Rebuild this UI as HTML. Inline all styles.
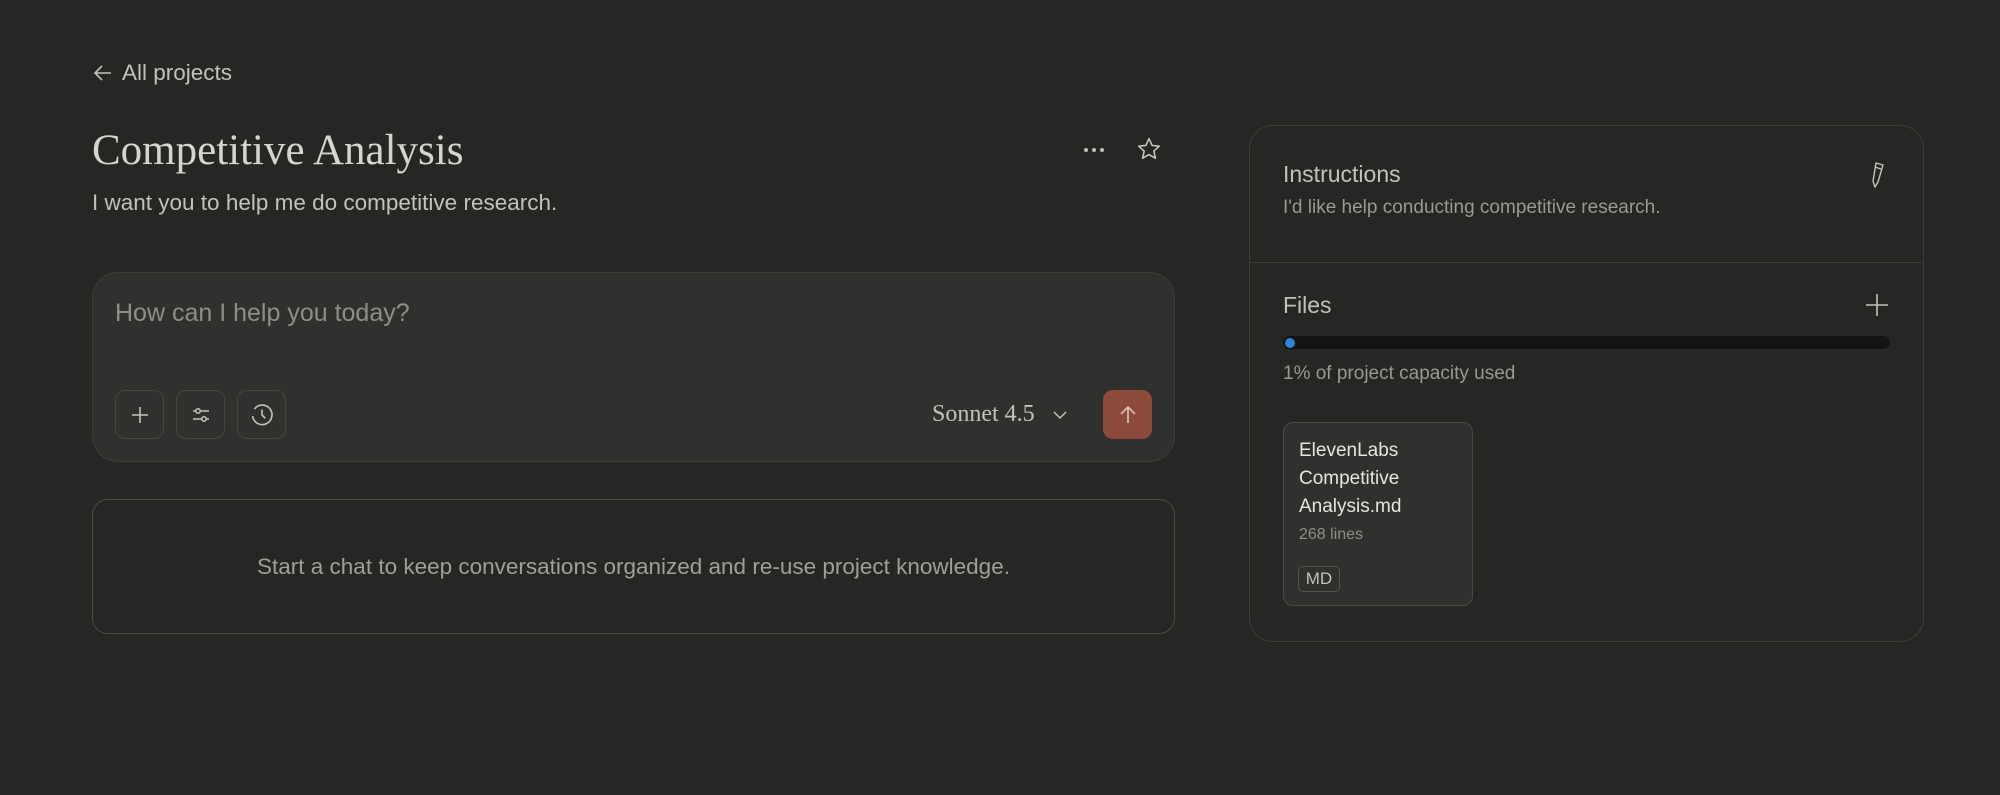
<!DOCTYPE html>
<html><head><meta charset="utf-8"><style>
*{box-sizing:border-box;margin:0;padding:0}
body{width:2000px;height:795px;background:#262624;color:#c3c1b8;font-family:"Liberation Sans",sans-serif;position:relative;overflow:hidden}
.a{position:absolute}
.serif{font-family:"Liberation Serif",serif}
.btn{position:absolute;top:390px;width:49px;height:49px;border:1px solid #46453f;border-radius:10px;display:flex;align-items:center;justify-content:center}
</style></head><body>
<div class="a" style="left:93px;top:60px;font-size:22.5px;color:#c3c1b8;display:flex;align-items:center;gap:9px">
<svg width="20" height="20" viewBox="0 0 20 20" fill="none" stroke="#c3c1b8" stroke-width="1.6"><path d="M18 10H3M9 3L2 10l7 7"/></svg>All projects</div>
<div class="a serif" style="left:92px;top:126px;font-size:43px;color:#d6d4cb">Competitive Analysis</div>
<div class="a" style="left:92px;top:190px;font-size:22.5px;color:#c3c1b8">I want you to help me do competitive research.</div>
<svg class="a" style="left:1082px;top:140px" width="24" height="20" viewBox="0 0 24 20" fill="#c3c1b8"><circle cx="4" cy="10" r="2"/><circle cx="12" cy="10" r="2"/><circle cx="20" cy="10" r="2"/></svg>
<svg class="a" style="left:1136px;top:136px" width="26" height="26" viewBox="0 0 24 24" fill="none" stroke="#c3c1b8" stroke-width="1.5" stroke-linejoin="round"><path d="M12 2.5l2.9 6.2 6.6.7-5 4.5 1.4 6.6L12 17.2 6.1 20.5l1.4-6.6-5-4.5 6.6-.7z"/></svg>
<div class="a" style="left:92px;top:272px;width:1083px;height:190px;background:#30302e;border:1px solid #3d3c38;border-radius:26px"></div>
<div class="a" style="left:115px;top:299px;font-size:25px;color:#8f8d86">How can I help you today?</div>
<div class="btn" style="left:115px"><svg width="22" height="22" viewBox="0 0 22 22" stroke="#c3c1b8" stroke-width="1.6"><path d="M11 3v16M3 11h16"/></svg></div>
<div class="btn" style="left:176px"><svg width="22" height="22" viewBox="0 0 22 22" fill="none" stroke="#c3c1b8" stroke-width="1.5"><path d="M3 7h16M3 15h16"/><circle cx="8" cy="7" r="2.2" fill="#30302e"/><circle cx="14" cy="15" r="2.2" fill="#30302e"/></svg></div>
<div class="btn" style="left:237px"><svg width="26" height="26" viewBox="0 0 24 24" fill="none" stroke="#c3c1b8" stroke-width="1.5"><path d="M5 6.5A9 9 0 1 1 3.3 13"/><path d="M12 7v5l3 3"/></svg></div>
<div class="a serif" style="left:932px;top:401px;font-size:24px;color:#c3c1b8">Sonnet 4.5</div>
<svg class="a" style="left:1051px;top:406px" width="18" height="18" viewBox="0 0 18 18" fill="none" stroke="#c3c1b8" stroke-width="1.5"><path d="M3 6l6 6 6-6"/></svg>
<div class="a" style="left:1103px;top:390px;width:49px;height:49px;border-radius:10px;background:#8b4a3a;display:flex;align-items:center;justify-content:center"><svg width="22" height="22" viewBox="0 0 22 22" fill="none" stroke="#d9b9ad" stroke-width="1.8"><path d="M11 19V3M4 10l7-7 7 7"/></svg></div>
<div class="a" style="left:92px;top:499px;width:1083px;height:135px;border:1px solid #4b4a45;border-radius:16px;display:flex;align-items:center;justify-content:center;font-size:22.5px;color:#a09e97">Start a chat to keep conversations organized and re-use project knowledge.</div>
<div class="a" style="left:1249px;top:125px;width:675px;height:517px;border:1px solid #3d3c38;border-radius:24px"></div>
<div class="a" style="left:1249px;top:262px;width:675px;height:1px;background:#3d3c38"></div>
<div class="a" style="left:1283px;top:161px;font-size:23px;color:#c3c1b8">Instructions</div>
<div class="a" style="left:1283px;top:197px;font-size:19px;color:#9a988f">I'd like help conducting competitive research.</div>
<svg class="a" style="left:1866px;top:160px" width="22" height="30" viewBox="0 0 22 30" fill="none" stroke="#c3c1b8" stroke-width="1.4" stroke-linejoin="round"><path d="M10 3l7 2-5 17-3 5-2-6z M9 7l6 2"/></svg>
<div class="a" style="left:1283px;top:292px;font-size:23px;color:#c3c1b8">Files</div>
<svg class="a" style="left:1865px;top:293px" width="24" height="24" viewBox="0 0 24 24" stroke="#c3c1b8" stroke-width="1.6"><path d="M12 1v22M1 12h22"/></svg>
<div class="a" style="left:1283px;top:336px;width:607px;height:13px;background:#141413;border-radius:7px"><div style="position:absolute;left:2px;top:1.5px;width:10px;height:10px;background:#2c84db;border-radius:5px"></div></div>
<div class="a" style="left:1283px;top:363px;font-size:19px;color:#9a988f">1% of project capacity used</div>
<div class="a" style="left:1283px;top:422px;width:190px;height:184px;background:#30302e;border:1px solid #4a4945;border-radius:10px"></div>
<div class="a" style="left:1299px;top:437px;font-size:19px;line-height:28px;color:#e6e4dc">ElevenLabs<br>Competitive<br>Analysis.md</div>
<div class="a" style="left:1299px;top:526px;font-size:16px;color:#8f8d86">268 lines</div>
<div class="a" style="left:1298px;top:566px;width:42px;height:26px;border:1px solid #55544f;border-radius:5px;font-size:17px;color:#c3c1b8;display:flex;align-items:center;justify-content:center">MD</div>
</body></html>
